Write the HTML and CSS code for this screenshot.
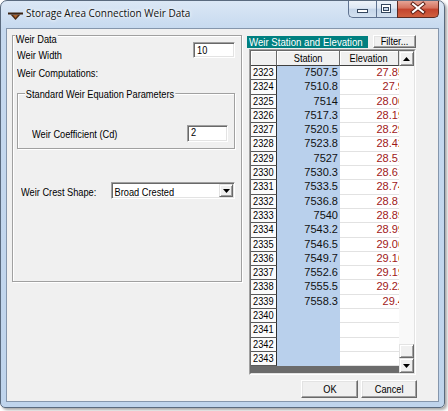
FILE: index.html
```html
<!DOCTYPE html>
<html>
<head>
<meta charset="utf-8">
<title>Storage Area Connection Weir Data</title>
<link rel="stylesheet" href="styles.css">
</head>
<body>
<div class="window">
  <div class="titlebar">
    <svg class="appicon" width="15" height="8" viewBox="0 0 15 8">
      <path d="M0 0.5h15v2H0z" fill="#3a2212"/>
      <path d="M2.5 2.5h10L7.5 8z" fill="#4a2a14"/>
      <path d="M5 3h5L7.5 6z" fill="#b0642c"/>
    </svg>
    <span class="title">Storage Area Connection Weir Data</span>
    <div class="capbtns">
      <div class="cbtn cmin">
        <svg width="28" height="17" viewBox="0 0 28 17"><rect x="9.5" y="9.5" width="10" height="3" fill="#fff" stroke="#34465e"/></svg>
      </div>
      <div class="cbtn cmax">
        <svg width="21" height="17" viewBox="0 0 21 17"><rect x="5.5" y="4.5" width="9" height="8" fill="#fff" stroke="#34465e"/><rect x="7.5" y="7.5" width="5" height="3" fill="#c9d8ea" stroke="#34465e"/></svg>
      </div>
      <div class="cbtn cclose">
        <svg width="42" height="17" viewBox="0 0 42 17"><path d="M16 4l10 8M26 4l-10 8" stroke="#5a1c12" stroke-width="4" stroke-linecap="square"/><path d="M16 4l10 8M26 4l-10 8" stroke="#fff" stroke-width="2" stroke-linecap="square"/></svg>
      </div>
    </div>
  </div>
  <div class="client">
    <div class="group gmain">
      <div class="gcap">Weir Data</div>
      <div class="wrow">
        <span class="lbl n">Weir Width</span>
        <div class="edit ewidth"><span class="n">10</span></div>
      </div>
      <div class="comp"><span class="n">Weir Computations:</span></div>
      <div class="group gstd">
        <div class="gcap">Standard Weir Equation Parameters</div>
        <div class="crow">
          <span class="lbl n">Weir Coefficient (Cd)</span>
          <div class="edit ecoef"><span class="n">2</span></div>
        </div>
      </div>
      <div class="srow">
        <span class="lbl n">Weir Crest Shape:</span>
        <div class="combo">
          <span class="ctext n">Broad Crested</span>
          <div class="dd"><svg width="7" height="4" viewBox="0 0 7 4"><path d="M0 0h7L3.5 4z" fill="#000"/></svg></div>
        </div>
      </div>
    </div>
    <div class="right">
      <div class="rtop">
        <div class="tlabel"><span class="n">Weir Station and Elevation</span></div>
        <div class="btn filter"><span class="nc">Filter...</span></div>
      </div>
      <div class="grid">
        <div class="gin">
          <div class="table">
            <div class="ghead">
              <div class="hc rhc"></div>
              <div class="hc st"><span class="nc">Station</span></div>
              <div class="hc el"><span class="nc">Elevation</span></div>
            </div>
            <div class="row"><div class="rh"><span class="n">2323</span></div><div class="st">7507.5</div><div class="el"><span>27.85</span></div></div>
            <div class="row"><div class="rh"><span class="n">2324</span></div><div class="st">7510.8</div><div class="el"><span>27.9</span></div></div>
            <div class="row"><div class="rh"><span class="n">2325</span></div><div class="st">7514</div><div class="el"><span>28.06</span></div></div>
            <div class="row"><div class="rh"><span class="n">2326</span></div><div class="st">7517.3</div><div class="el"><span>28.19</span></div></div>
            <div class="row"><div class="rh"><span class="n">2327</span></div><div class="st">7520.5</div><div class="el"><span>28.29</span></div></div>
            <div class="row"><div class="rh"><span class="n">2328</span></div><div class="st">7523.8</div><div class="el"><span>28.42</span></div></div>
            <div class="row"><div class="rh"><span class="n">2329</span></div><div class="st">7527</div><div class="el"><span>28.51</span></div></div>
            <div class="row"><div class="rh"><span class="n">2330</span></div><div class="st">7530.3</div><div class="el"><span>28.61</span></div></div>
            <div class="row"><div class="rh"><span class="n">2331</span></div><div class="st">7533.5</div><div class="el"><span>28.74</span></div></div>
            <div class="row"><div class="rh"><span class="n">2332</span></div><div class="st">7536.8</div><div class="el"><span>28.81</span></div></div>
            <div class="row"><div class="rh"><span class="n">2333</span></div><div class="st">7540</div><div class="el"><span>28.89</span></div></div>
            <div class="row"><div class="rh"><span class="n">2334</span></div><div class="st">7543.2</div><div class="el"><span>28.99</span></div></div>
            <div class="row"><div class="rh"><span class="n">2335</span></div><div class="st">7546.5</div><div class="el"><span>29.06</span></div></div>
            <div class="row"><div class="rh"><span class="n">2336</span></div><div class="st">7549.7</div><div class="el"><span>29.16</span></div></div>
            <div class="row"><div class="rh"><span class="n">2337</span></div><div class="st">7552.6</div><div class="el"><span>29.19</span></div></div>
            <div class="row"><div class="rh"><span class="n">2338</span></div><div class="st">7555.5</div><div class="el"><span>29.22</span></div></div>
            <div class="row"><div class="rh"><span class="n">2339</span></div><div class="st">7558.3</div><div class="el"><span>29.4</span></div></div>
            <div class="row"><div class="rh"><span class="n">2340</span></div><div class="st"></div><div class="el"><span></span></div></div>
            <div class="row"><div class="rh"><span class="n">2341</span></div><div class="st"></div><div class="el"><span></span></div></div>
            <div class="row"><div class="rh"><span class="n">2342</span></div><div class="st"></div><div class="el"><span></span></div></div>
            <div class="row"><div class="rh"><span class="n">2343</span></div><div class="st"></div><div class="el"><span></span></div></div>
            <div class="gfoot"></div>
          </div>
          <div class="vscroll">
            <div class="sbtn"><svg width="7" height="4" viewBox="0 0 7 4"><path d="M0 4h7L3.5 0z" fill="#000"/></svg></div>
            <div class="strack"></div>
            <div class="sthumb"></div>
            <div class="sbtn"><svg width="7" height="4" viewBox="0 0 7 4"><path d="M0 0h7L3.5 4z" fill="#000"/></svg></div>
          </div>
        </div>
      </div>
      <div class="btns">
        <div class="btn ok"><span class="nc">OK</span></div>
        <div class="btn cancel"><span class="nc">Cancel</span></div>
      </div>
    </div>
  </div>
</div>
</body>
</html>
```
FILE: styles.css
```css
* { box-sizing: border-box; }
html, body { margin: 0; padding: 0; background: #fff; }
body {
  width: 448px; height: 411px; overflow: hidden;
  font-family: "Liberation Sans", Arial, sans-serif;
  font-size: 11px; line-height: 12px; color: #000;
}

/* narrow UI face (MS Sans Serif look): Arial metrics compressed horizontally */
.n, .nc { display: inline-block; white-space: nowrap; transform: scaleX(.84); }
.n { transform-origin: 0 50%; }
.nc { transform-origin: 50% 50%; }

/* window frame */
.window {
  width: 445px; height: 408px;
  border: 1px solid #5a6a7e;
  border-radius: 7px 7px 5px 5px;
  padding: 0 5px 5px;
  background: linear-gradient(#dbe7f5, #c6d9ef 28px, #bfd4ec);
  box-shadow: 2px 2px 3px rgba(0,0,0,.35);
  display: flex; flex-direction: column;
}
.titlebar { height: 27px; display: flex; align-items: flex-start; }
.appicon { margin: 11px 0 0 2px; flex: none; }
.title {
  margin: 6px 0 0 3px;
  font-family: "Open Sans", "Noto Sans", sans-serif;
  font-size: 10px; line-height: 12px; color: #111;
  text-shadow: 0 0 5px #fff, 0 0 3px #fff;
}
.capbtns { margin-left: auto; display: flex; }
.cbtn { height: 17px; display: flex; border: 1px solid #5f7290; border-top: 0; }
.cbtn svg { display: block; margin: -1px; }
.cmin {
  width: 28px; border-radius: 0 0 0 5px; border-right: 0;
  background: linear-gradient(#eef3f9, #dde7f3 45%, #c5d5e9 50%, #d4e1f0);
}
.cmax {
  width: 21px; border-right: 0;
  background: linear-gradient(#eef3f9, #dde7f3 45%, #c5d5e9 50%, #d4e1f0);
}
.cclose {
  width: 42px; border-radius: 0 0 5px 0; border-color: #5b2a22;
  background: linear-gradient(#e6a495, #d5705b 45%, #c3432d 50%, #d0603f);
}

.client {
  flex: 1;
  border: 1px solid #8596ac;
  background: #f0f0f0;
  display: flex; align-items: flex-start;
  padding: 6px 0 0 5px;
}

/* group boxes */
.group {
  border: 1px solid #a0a0a0;
  box-shadow: inset 1px 1px 0 #fff, 1px 1px 0 #fff;
}
.gcap {
  width: max-content; background: #f0f0f0; padding: 0 1px;
  white-space: nowrap; transform: scaleX(.84); transform-origin: 0 0;
}
.gmain { width: 230px; height: 247px; flex: none; }
.gmain > .gcap { margin: -3px 0 0 2px; }

.wrow { display: flex; align-items: flex-start; margin-top: -3px; padding: 0 6px 0 4px; }
.wrow .lbl { margin-top: 7px; }
.edit {
  margin-left: auto;
  background: #fff;
  border: 1px solid; border-color: #a0a0a0 #fff #fff #a0a0a0;
  box-shadow: inset 1px 1px 0 #696969, inset -1px -1px 0 #e3e3e3;
  padding: 1px 3px 0;
}
.ewidth { width: 42px; height: 16px; }
.comp { margin: 6px 0 0 4px; }

.gstd { margin: 14px 6px 0 4px; height: 56px; }
.gstd > .gcap { margin: -6px 0 0 7px; }
.crow { display: flex; align-items: flex-start; margin-top: 25px; padding: 0 6px 0 14px; }
.crow .lbl { margin-top: 3px; }
.ecoef { width: 41px; height: 17px; padding-top: 0; }

.srow { display: flex; align-items: flex-start; margin-top: 33px; padding: 0 6px 0 8px; }
.srow .lbl { margin-top: 4px; }
.combo {
  margin-left: auto; width: 126px; height: 17px;
  display: flex;
  background: #fff;
  border: 1px solid; border-color: #a0a0a0 #fff #fff #a0a0a0;
  box-shadow: inset 1px 1px 0 #696969, inset -1px -1px 0 #e3e3e3;
}
.ctext { padding: 3px 0 0 3px; }
.dd {
  margin: 1px 1px 1px auto; width: 14px;
  background: #f0f0f0;
  border: 1px solid; border-color: #e3e3e3 #696969 #696969 #e3e3e3;
  box-shadow: inset 1px 1px 0 #fff, inset -1px -1px 0 #a0a0a0;
  display: flex; align-items: center; justify-content: center;
}
.dd svg { display: block; }

/* right side */
.right { margin-left: 5px; width: 190px; flex: none; display: flex; flex-direction: column; }
.rtop { display: flex; align-items: flex-start; }
.tlabel {
  margin-top: 1px; width: 121px; height: 12px;
  background: #008080; color: #fff;
  padding-left: 2px; font-size: 11.5px; line-height: 12px;
  white-space: nowrap; overflow: hidden;
}
.btn {
  background: #f0f0f0;
  border: 1px solid; border-color: #fff #696969 #696969 #fff;
  box-shadow: inset -1px -1px 0 #a0a0a0, inset 1px 1px 0 #e3e3e3;
  text-align: center;
}
.filter { margin-left: 5px; width: 43px; height: 13px; line-height: 11px; }

.grid {
  margin: 1px 0 0 2px; width: 167px; height: 326px;
  border: 1px solid; border-color: #a0a0a0 #fff #fff #a0a0a0;
}
.gin {
  height: 100%; display: flex;
  border: 1px solid; border-color: #696969 #e3e3e3 #e3e3e3 #696969;
}
.table { width: 148px; display: flex; flex-direction: column; }
.ghead { display: flex; height: 15px; flex: none; }
.hc {
  background: #f0f0f0;
  border-right: 1px solid #696969; border-bottom: 1px solid #404040;
  box-shadow: inset 1px 1px 0 #fff;
  text-align: center; padding-top: 1px; line-height: 13px;
}
.rh, .rhc { width: 26px; flex: none; }
.st { width: 63px; flex: none; }
.el { width: 59px; flex: none; }

.row { display: flex; height: 14.3px; flex: none; line-height: 13px; }
.row .rh {
  background: #fbfbfb;
  border-right: 1px solid #303030; border-bottom: 1px solid #5a5a5a;
  padding-left: 2px;
}
.row .st {
  background: #b9d0ec;
  text-align: right; padding-right: 2px; color: #111;
}
.row .el {
  background: #fff; overflow: hidden;
  border-bottom: 1px solid #e2e2e2;
  color: #a01818;
}
.row .el span { display: block; width: 64px; text-align: right; white-space: nowrap; }
.gfoot { flex: 1; background: #6b6b6b; }

.vscroll { width: 15px; display: flex; flex-direction: column; }
.sbtn, .sthumb {
  background: #f0f0f0;
  border: 1px solid; border-color: #e3e3e3 #696969 #696969 #e3e3e3;
  box-shadow: inset 1px 1px 0 #fff, inset -1px -1px 0 #a0a0a0;
}
.sbtn { height: 15px; flex: none; display: flex; align-items: center; justify-content: center; }
.sbtn svg { display: block; }
.strack { flex: 1; background: #f9f9f9; }
.sthumb { height: 14px; flex: none; }

.btns { display: flex; justify-content: flex-end; gap: 3px; margin-top: 5px; padding-right: 20px; }
.ok, .cancel { height: 18px; line-height: 16px; }
.ok { width: 57px; }
.cancel { width: 56px; }
```
